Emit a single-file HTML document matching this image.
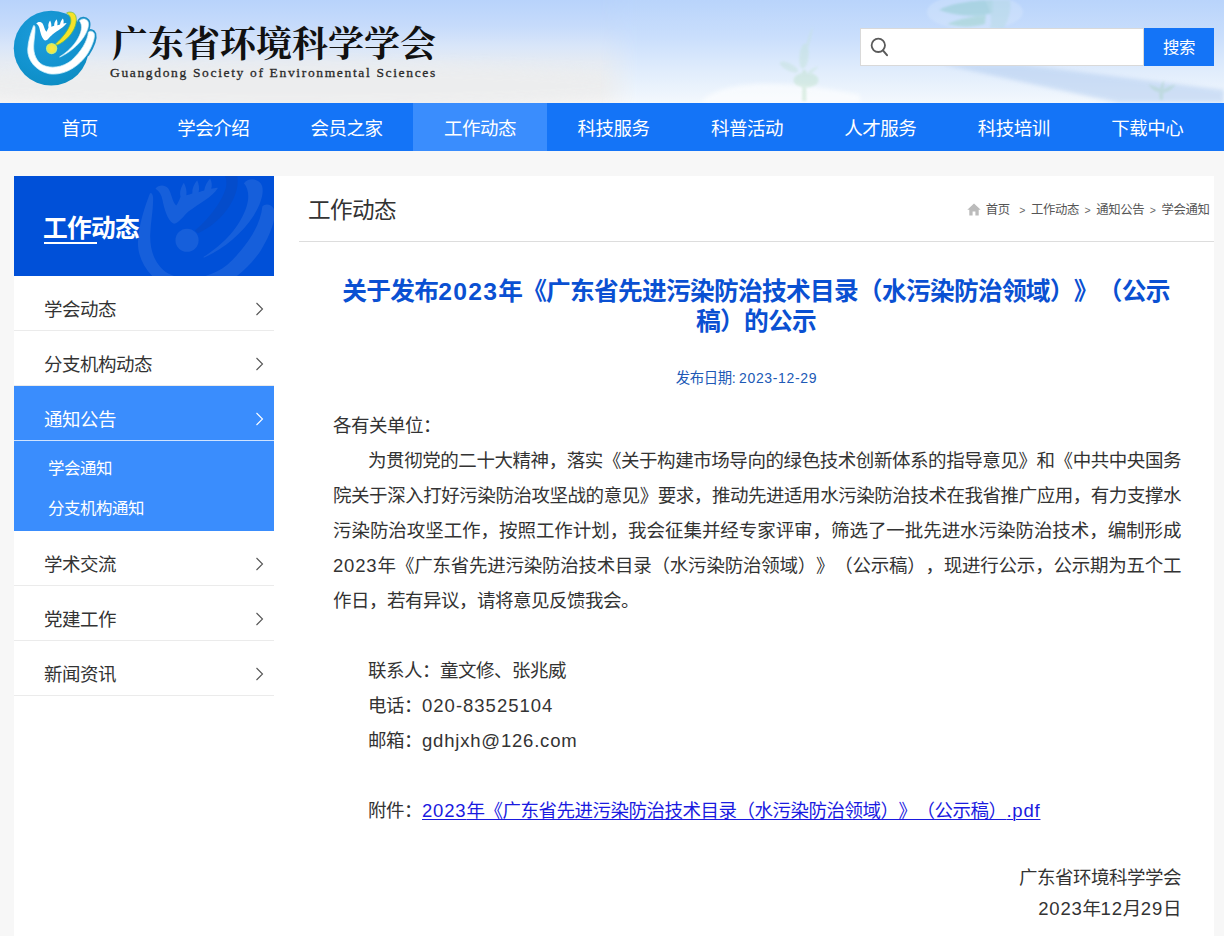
<!DOCTYPE html>
<html lang="zh-CN">
<head>
<meta charset="utf-8">
<title>广东省环境科学学会</title>
<style>
*{margin:0;padding:0;box-sizing:border-box;}
html,body{width:1224px;height:936px;overflow:hidden;background:#f7f7f7;}
body{text-spacing-trim:space-all;font-family:"Liberation Sans","Noto Sans CJK SC",sans-serif;color:#333;position:relative;}
a{text-decoration:none;color:inherit;}
#hd{position:absolute;left:0;top:0;width:1224px;height:103px;overflow:hidden;
 background:linear-gradient(180deg,#b9d4fb 0%,#cfe1fb 28%,#e3ecf8 50%,#eef1f5 68%,#f5f6f7 100%);}
#hd svg.bg{position:absolute;left:0;top:0;}
#logo{position:absolute;left:0;top:0;}
#tt{position:absolute;left:112px;top:19px;font-family:"Liberation Serif","Noto Serif CJK SC",serif;font-weight:700;font-size:36px;line-height:52px;color:#111;white-space:nowrap;letter-spacing:0px;}
#en{position:absolute;left:110px;top:63.5px;font-family:"Liberation Serif","Noto Serif CJK SC",serif;font-size:13.5px;line-height:18px;color:#2a2a2a;-webkit-text-stroke:0.3px #2a2a2a;white-space:nowrap;letter-spacing:1.655px;}
#sbox{position:absolute;left:860px;top:28px;width:284px;height:38px;background:#fff;border:1px solid #d9d9d9;}
#sbtn{position:absolute;left:1144px;top:28px;width:70px;height:38px;background:#1474f7;color:#fff;font-size:16.45px;letter-spacing:-0.45px;line-height:38px;text-align:center;}
#sico{position:absolute;left:868px;top:35px;}
#nav{position:absolute;left:0;top:103px;width:1224px;height:48px;background:#1474f7;}
#nav ul{position:absolute;left:13px;top:0;width:1201px;height:48px;list-style:none;display:flex;}
#nav li{flex:1 1 0;height:48px;line-height:51px;text-align:center;color:#fff;font-size:18.5px;letter-spacing:-0.5px;}
#nav li.on{background:#3a8dfd;}
#side{position:absolute;left:14px;top:176px;width:260px;height:760px;background:#fff;}
#sh{position:relative;height:100px;background:#0050d8;overflow:hidden;}
#sh b{position:absolute;left:29px;top:34.5px;font-size:24.7px;letter-spacing:-0.7px;line-height:36px;color:#fff;font-weight:bold;}
#sh i{position:absolute;left:30px;top:66px;width:53px;height:2px;background:#fff;}
#side .it{position:relative;height:55px;border-bottom:1px solid #ebebeb;padding-left:30px;font-size:18.5px;letter-spacing:-0.5px;line-height:67px;color:#333;}
#side .it svg{position:absolute;left:241px;top:26px;}
#side .act{background:#3a8dfd;color:#fff;border-bottom:1px solid #cfe3ff;}
#side .sub{background:#3a8dfd;height:90px;padding:8px 0 0 34px;color:#fff;font-size:16.45px;letter-spacing:-0.45px;line-height:39.5px;}
#main{position:absolute;left:274px;top:176px;width:939.5px;height:760px;background:#fff;}
#mh{position:absolute;left:34px;top:16px;font-size:22.6px;letter-spacing:-0.6px;line-height:38px;color:#333;}
#hr{position:absolute;left:25px;top:65px;width:914.5px;height:1px;background:#ddd;}
#bc{position:absolute;right:4px;top:24.5px;font-size:12.35px;letter-spacing:-0.35px;line-height:18px;color:#555;white-space:nowrap;}
#bc svg{position:absolute;left:-18.5px;top:2px;}
#bc u{display:inline-block;width:17.3px;text-align:center;text-decoration:none;font-size:10.5px;letter-spacing:0;color:#666;}
#ttl{position:absolute;left:58px;top:101px;width:848px;text-align:center;font-size:24.7px;letter-spacing:-0.7px;line-height:30px;font-weight:bold;color:#0a50d2;}
#dt{position:absolute;left:48.5px;top:190.5px;width:848px;text-align:center;font-size:14.4px;letter-spacing:-0.4px;line-height:22px;color:#2059b6;}
#ct{position:absolute;left:59px;top:232px;width:848px;font-size:18.5px;letter-spacing:-0.5px;line-height:35px;color:#333;text-align:justify;}
#ct p.in{text-indent:35px;}
#ct .l{letter-spacing:0.8px;}
#ct a{color:#1a1adf;text-decoration:underline;text-decoration-thickness:1px;text-underline-offset:1.5px;}
#ct p.r{text-align:right;line-height:31px;}
</style>
</head>
<body>
<div id="hd">
<svg class="bg" width="1224" height="103" viewBox="0 0 1224 103">
<defs>
<linearGradient id="sky" x1="0" y1="0" x2="0" y2="1"><stop offset="0" stop-color="#b8d3fb"/><stop offset="0.25" stop-color="#c6dbfb"/><stop offset="0.45" stop-color="#d9e6f9"/><stop offset="0.6" stop-color="#e5ebf3"/><stop offset="0.8" stop-color="#edeff1"/><stop offset="1" stop-color="#f6f5f4"/></linearGradient>
<linearGradient id="sky2" x1="0" y1="0" x2="0" y2="1"><stop offset="0" stop-color="#b9d4fb"/><stop offset="0.35" stop-color="#c9defc"/><stop offset="0.7" stop-color="#e1edfc"/><stop offset="1" stop-color="#f3f8fd"/></linearGradient>
<linearGradient id="fade" x1="0" y1="0" x2="1" y2="0"><stop offset="0" stop-color="#fff" stop-opacity="0"/><stop offset="0.06" stop-color="#fff" stop-opacity="1"/><stop offset="1" stop-color="#fff" stop-opacity="1"/></linearGradient>
<mask id="mk"><rect x="600" y="0" width="624" height="103" fill="url(#fade)"/></mask>
<filter id="b2" x="-20%" y="-20%" width="140%" height="140%"><feGaussianBlur stdDeviation="2"/></filter>
<filter id="b5" x="-20%" y="-50%" width="140%" height="200%"><feGaussianBlur stdDeviation="6"/></filter>
<filter id="b1" x="-20%" y="-20%" width="140%" height="140%"><feGaussianBlur stdDeviation="1"/></filter>
</defs>
<rect width="1224" height="103" fill="url(#sky)"/>
<ellipse cx="300" cy="86" rx="360" ry="22" fill="#ecedee" opacity="0.8" filter="url(#b5)"/>
<g mask="url(#mk)">
<rect x="600" width="624" height="103" fill="url(#sky2)"/>
<path d="M940 64 L1018 64 L1224 90 L1224 103 L1120 103 Z" fill="#b4cdf0" opacity="0.55" filter="url(#b2)"/>
<path d="M700 103 C720 80 780 78 860 95 L860 103 Z" fill="#fff" opacity="0.6" filter="url(#b2)"/>
<g filter="url(#b1)" opacity="0.4">
<path d="M802 101 L802.5 70 L806 70 L806.5 101 Z" fill="#b4dcc0"/>
<ellipse cx="806" cy="80" rx="12.5" ry="7.5" fill="#b8dfc4"/>
<ellipse cx="789" cy="67" rx="10" ry="3.6" transform="rotate(26 789 67)" fill="#bfe0d4"/>
<ellipse cx="804" cy="56" rx="4.6" ry="12.5" transform="rotate(6 804 56)" fill="#bfe2d2"/>
<path d="M806 46 C808 38 810 32 813 26 C812 34 810 42 808 48 Z" fill="#c4e4d6"/>
<path d="M808 72 C812 68 816 67 819 66 C816 70 812 73 809 75 Z" fill="#c4e4d6"/>
</g>
<g filter="url(#b1)" opacity="0.5">
<ellipse cx="975" cy="12" rx="48" ry="18" fill="#dbe9fc" opacity="0.7"/>
<path d="M939 10 C950 3 975 0 993 0 L993 13 C975 18 955 16 939 10 Z" fill="#9ad2cc"/>
<path d="M947 24 C960 18 975 16 986 15 L985 24 C972 28 958 27 947 24 Z" fill="#a4d8c8"/>
<path d="M985 0 L1010 0 C1012 10 1008 20 1004 28 L990 28 C993 18 989 8 985 0 Z" fill="#b4dcd8" opacity="0.7"/>
</g>
<g filter="url(#b1)" opacity="0.3">
<path d="M1160 100 C1158 92 1160 86 1164 80 C1164 88 1163 94 1163 100 Z" fill="#9fd0b0"/>
<path d="M1162 90 C1156 86 1152 86 1148 84 C1152 90 1156 92 1162 93 Z" fill="#9fd0b0"/>
<path d="M1163 90 C1168 86 1172 86 1176 84 C1172 90 1168 92 1163 93 Z" fill="#9fd0b0"/>
</g>
</g>
</svg>
<svg id="logo" width="110" height="100" viewBox="0 0 110 100">
<defs><radialGradient id="lg" cx="0.4" cy="0.35" r="0.75"><stop offset="0" stop-color="#1e9cdb"/><stop offset="0.6" stop-color="#1293cf"/><stop offset="1" stop-color="#0b8bc0"/></radialGradient>
<radialGradient id="yb" cx="0.5" cy="0.5" r="0.5"><stop offset="0" stop-color="#fbe94a"/><stop offset="0.6" stop-color="#f4e742"/><stop offset="1" stop-color="#b9ee86"/></radialGradient></defs>
<g transform="translate(20,5) scale(0.08547)">
<circle cx="365" cy="505" r="438" fill="url(#lg)"/>
<path d="M800 318 C815 296 856 300 870 338 C884 390 850 480 790 575 L740 560 Z" fill="#1a8fc6" stroke="#1a8fc6" stroke-width="46" stroke-linejoin="round"/>
<path d="M695 185 C715 158 762 150 790 185 C815 218 800 295 750 372 L700 340 Z" fill="#1a8fc6" stroke="#1a8fc6" stroke-width="46" stroke-linejoin="round"/>
<path d="M158 243 C125 330 95 420 90 520 C86 640 180 770 340 805 C520 830 690 720 790 570 C850 470 880 380 868 335 C852 302 815 300 800 318 C790 420 720 540 600 650 C500 730 360 750 262 700 C190 655 158 575 160 480 C162 400 180 330 176 262 C172 240 164 236 158 243 Z" fill="#fff" stroke="#c9eefa" stroke-width="9" stroke-linejoin="round"/>
<path d="M465 610 C560 570 680 480 750 370 C800 290 815 215 790 185 C760 150 715 160 695 185 C740 240 720 330 660 420 C600 510 520 570 465 605 Z" fill="#fff" stroke="#c9eefa" stroke-width="7" stroke-linejoin="round"/>
<path d="M190 216 C205 196 240 190 262 214 C282 240 284 290 308 312 C318 300 326 280 333 262 C326 235 336 205 352 182 C364 205 370 232 366 254 C378 250 390 247 400 243 C398 215 410 190 428 168 C438 190 442 215 436 236 C448 233 458 230 468 227 C472 200 484 178 502 158 C512 178 514 200 508 216 C522 216 538 208 546 212 C516 262 440 300 380 345 C348 372 320 420 292 415 C258 395 240 330 230 280 C224 250 212 228 190 216 Z" fill="#fff"/>
<path d="M415 455 C500 380 570 290 592 210 C602 160 585 120 545 95 C570 75 630 75 652 125 C675 200 640 290 575 365 C530 415 480 450 432 470 Z" fill="#f6e22a" stroke="#6dbf4a" stroke-width="9" stroke-linejoin="round"/>
<circle cx="370" cy="510" r="66" fill="url(#yb)"/>
</g></svg>
<div id="tt">广东省环境科学学会</div>
<div id="en">Guangdong Society of Environmental Sciences</div>
<div id="sbox"></div>
<svg id="sico" width="22" height="24" viewBox="0 0 22 24"><circle cx="10.3" cy="10.3" r="6.7" fill="none" stroke="#5a5a5a" stroke-width="1.8"/><path d="M14.9 15.4L19.0 20.2" stroke="#5a5a5a" stroke-width="2" stroke-linecap="round"/></svg>
<div id="sbtn">搜索</div>
</div>
<div id="nav"><ul>
<li>首页</li><li>学会介绍</li><li>会员之家</li><li class="on">工作动态</li><li>科技服务</li><li>科普活动</li><li>人才服务</li><li>科技培训</li><li>下载中心</li>
</ul></div>
<div id="side">
<div id="sh"><svg style="position:absolute;left:0;top:0" width="260" height="100" viewBox="0 0 260 100"><g transform="translate(67.2,-35.4) scale(2.05)"><g transform="translate(20,5) scale(0.08547)" fill="#fff" fill-opacity="0.085">
<path d="M158 243 C125 330 95 420 90 520 C86 640 180 770 340 805 C520 830 690 720 790 570 C850 470 880 380 868 335 C852 302 815 300 800 318 C790 420 720 540 600 650 C500 730 360 750 262 700 C190 655 158 575 160 480 C162 400 180 330 176 262 C172 240 164 236 158 243 Z"/>
<path d="M465 610 C560 570 680 480 750 370 C800 290 815 215 790 185 C760 150 715 160 695 185 C740 240 720 330 660 420 C600 510 520 570 465 605 Z"/>
<path d="M190 216 C205 196 240 190 262 214 C282 240 284 290 308 312 C318 300 326 280 333 262 C326 235 336 205 352 182 C364 205 370 232 366 254 C378 250 390 247 400 243 C398 215 410 190 428 168 C438 190 442 215 436 236 C448 233 458 230 468 227 C472 200 484 178 502 158 C512 178 514 200 508 216 C522 216 538 208 546 212 C516 262 440 300 380 345 C348 372 320 420 292 415 C258 395 240 330 230 280 C224 250 212 228 190 216 Z"/>
<path d="M415 455 C500 380 570 290 592 210 C602 160 585 120 545 95 C570 75 630 75 652 125 C675 200 640 290 575 365 C530 415 480 450 432 470 Z" fill="#1a3a8a" fill-opacity="0.16"/>
<circle cx="370" cy="510" r="66"/>
</g></g></svg><b>工作动态</b><i></i></div>
<div class="it">学会动态<svg width="9" height="14" viewBox="0 0 9 14"><path d="M1.5 1L7.5 7L1.5 13" fill="none" stroke="#555" stroke-width="1.1"/></svg></div>
<div class="it">分支机构动态<svg width="9" height="14" viewBox="0 0 9 14"><path d="M1.5 1L7.5 7L1.5 13" fill="none" stroke="#555" stroke-width="1.1"/></svg></div>
<div class="it act">通知公告<svg width="9" height="14" viewBox="0 0 9 14"><path d="M1.5 1L7.5 7L1.5 13" fill="none" stroke="#fff" stroke-width="1.1"/></svg></div>
<div class="sub">学会通知<br>分支机构通知</div>
<div class="it">学术交流<svg width="9" height="14" viewBox="0 0 9 14"><path d="M1.5 1L7.5 7L1.5 13" fill="none" stroke="#555" stroke-width="1.1"/></svg></div>
<div class="it">党建工作<svg width="9" height="14" viewBox="0 0 9 14"><path d="M1.5 1L7.5 7L1.5 13" fill="none" stroke="#555" stroke-width="1.1"/></svg></div>
<div class="it">新闻资讯<svg width="9" height="14" viewBox="0 0 9 14"><path d="M1.5 1L7.5 7L1.5 13" fill="none" stroke="#555" stroke-width="1.1"/></svg></div>
</div>
<div id="main">
<div id="mh">工作动态</div>
<div id="bc"><svg width="14" height="13" viewBox="0 0 14 13"><path d="M7 0.5L0.3 6.8H2.3V12.5H5.6V8.6H8.4V12.5H11.7V6.8H13.7Z" fill="#bbb"/></svg>首页<u style="margin-left:4px">&gt;</u>工作动态<u>&gt;</u>通知公告<u>&gt;</u>学会通知</div>
<div id="hr"></div>
<div id="ttl">关于发布<span style="letter-spacing:1.27px">2023</span>年《广东省先进污染防治技术目录（水污染防治领域）》（公示<br>稿）的公示</div>
<div id="dt">发布日期: <span style="font-size:14px;letter-spacing:0.65px">2023-12-29</span></div>
<div id="ct">
<p>各有关单位：</p>
<p class="in">为贯彻党的二十大精神，落实《关于构建市场导向的绿色技术创新体系的指导意见》和《中共中央国务院关于深入打好污染防治攻坚战的意见》要求，推动先进适用水污染防治技术在我省推广应用，有力支撑水污染防治攻坚工作，按照工作计划，我会征集并经专家评审，筛选了一批先进水污染防治技术，编制形成<span class="l">2023</span>年《广东省先进污染防治技术目录（水污染防治领域）》（公示稿），现进行公示，公示期为五个工作日，若有异议，请将意见反馈我会。</p>
<p>&nbsp;</p>
<p class="in">联系人：童文修、张兆威</p>
<p class="in">电话：<span class="l" style="letter-spacing:1px">020-83525104</span></p>
<p class="in">邮箱：<span class="l">gdhjxh@126.com</span></p>
<p>&nbsp;</p>
<p class="in">附件：<a><span class="l">2023</span>年《广东省先进污染防治技术目录（水污染防治领域）》（公示稿）<span class="l">.pdf</span></a></p>
<p>&nbsp;</p>
<p class="r" style="margin-top:-1px">广东省环境科学学会</p>
<p class="r"><span class="l">2023</span>年<span class="l">12</span>月<span class="l">29</span>日</p>
</div>
</div>
</body>
</html>
